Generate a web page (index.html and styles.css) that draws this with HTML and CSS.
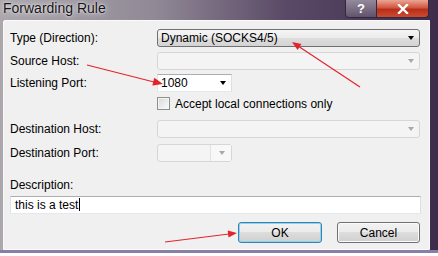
FILE: index.html
```html
<!DOCTYPE html>
<html lang="en">
<head>
    <meta charset="UTF-8">
    <title>Forwarding Rule</title>
    <link rel="stylesheet" href="styles.css">
</head>
<body>
    <div class="window">
        <div class="titlebar">
            <span class="title">Forwarding Rule</span>
            <div class="caption">
                <span class="cap-btn help">?</span>
                <span class="cap-btn close">
                    <svg width="12" height="10" viewBox="0 0 12 10">
                        <path d="M2 1 L10 9 M10 1 L2 9" stroke="#fff" stroke-width="2.4" stroke-linecap="square"/>
                    </svg>
                </span>
            </div>
        </div>

        <div class="client">
            <div class="row r-type">
                <label>Type (Direction):</label>
                <div class="combo wide"><span>Dynamic (SOCKS4/5)</span><i class="arrow"></i></div>
            </div>
            <div class="row r-source">
                <label>Source Host:</label>
                <div class="combo wide disabled"><i class="arrow"></i></div>
            </div>
            <div class="row r-listen">
                <label>Listening Port:</label>
                <div class="combo short edit"><span>1080</span><i class="arrow"></i></div>
            </div>
            <div class="row r-check">
                <span class="checkbox"></span>
                <span>Accept local connections only</span>
            </div>
            <div class="row r-dhost">
                <label>Destination Host:</label>
                <div class="combo wide disabled"><i class="arrow"></i></div>
            </div>
            <div class="row r-dport">
                <label>Destination Port:</label>
                <div class="combo short disabled split"><span class="drop"><i class="arrow"></i></span></div>
            </div>

            <div class="desc-label">Description:</div>
            <div class="textbox">this is a test<span class="caret"></span></div>

            <div class="buttons">
                <button class="btn ok">OK</button>
                <button class="btn cancel">Cancel</button>
            </div>
        </div>

        <!-- red annotation arrows drawn over the dialog -->
        <svg class="marks" width="438" height="256" viewBox="0 0 438 256">
            <g stroke="#e3232b" stroke-width="1.2" fill="#e3232b">
                <line x1="360" y1="87" x2="298" y2="46"/>
                <polygon points="292,42 301.4,44.1 297.6,49.9" stroke="none"/>
                <line x1="87" y1="65" x2="154" y2="82"/>
                <polygon points="163,84 154.3,77.7 152.3,85.5" stroke="none"/>
                <line x1="165" y1="242" x2="229" y2="234"/>
                <polygon points="237,233 228.5,237.6 227.7,230.6" stroke="none"/>
            </g>
        </svg>
    </div>
</body>
</html>
```

FILE: styles.css
```css
* {
    box-sizing: border-box;
}

body {
    margin: 0;
    background: #ffffff;
    font-family: "Liberation Sans", Arial, sans-serif;
    font-size: 12px;
    color: #000;
}

.window {
    position: relative;
    width: 438px;
    height: 253px;
    display: flex;
    flex-direction: column;
    background: linear-gradient(to right, #aba7ad 0%, #918a96 35%, #5b4a67 65%, #3d2d4a 100%);
    border-bottom: 3px solid #8a7ea6;
}

.titlebar {
    height: 20px;
    display: flex;
    justify-content: space-between;
    align-items: flex-start;
}

.title {
    padding-left: 3px;
    font-size: 14px;
    line-height: 16px;
    color: #151515;
    text-shadow: 0 0 6px rgba(255, 255, 255, 0.9), 0 0 2px rgba(255, 255, 255, 0.8);
}

.caption {
    display: flex;
    margin-right: 9px;
}

.cap-btn {
    height: 18px;
    display: flex;
    align-items: center;
    justify-content: center;
    border: 1px solid #33283b;
    border-top: none;
}

.help {
    width: 32px;
    border-radius: 0 0 0 4px;
    background: linear-gradient(rgba(255, 255, 255, 0.4), rgba(255, 255, 255, 0.12));
    color: #fff;
    font-weight: bold;
    font-size: 13px;
}

.close {
    width: 52px;
    border-left: none;
    border-radius: 0 0 4px 0;
    background: linear-gradient(#e9a595, #d4563f 45%, #b72f1b 55%, #cc4a30);
}

.client {
    margin: 0 8px 0 3px;
    height: 230px;
    background: #f0f0f0;
    border: 1px solid #fafafa;
    border-top-left-radius: 2px;
    padding: 7px 9px 0 6px;
    display: flex;
    flex-direction: column;
}

.row {
    display: flex;
    align-items: center;
    height: 18px;
}

.row label {
    width: 147px;
}

.r-type { margin-top: 1px; }
.r-source { margin-top: 5px; }
.r-listen { margin-top: 4px; }
.r-check { margin-top: 5px; height: 13px; padding-left: 147px; gap: 5px; }
.r-dhost { margin-top: 10px; }
.r-dport { margin-top: 6px; }

.combo {
    position: relative;
    height: 18px;
    padding-left: 3px;
    display: flex;
    align-items: center;
    border: 1px solid #707070;
    border-radius: 3px;
    background: linear-gradient(#f6f6f6, #ebebeb 50%, #dedede 51%, #d3d3d3);
}

.wide {
    width: 263px;
}

.short {
    width: 75px;
}

.arrow {
    position: absolute;
    right: 5px;
    top: 6px;
    border-top: 4px solid #000;
    border-left: 3.5px solid transparent;
    border-right: 3.5px solid transparent;
}

.combo.disabled {
    border-color: #d6d6d6;
    background: #f4f4f4;
}

.combo.disabled .arrow {
    border-top-color: #a8a8a8;
}

.combo.edit {
    border-radius: 0;
    background: #fff;
    border-color: #abadb3 #dbdfe6 #e3e9ef #e2e3ea;
}

.combo.split .drop {
    position: absolute;
    right: 0;
    top: 0;
    bottom: 0;
    width: 21px;
    border-left: 1px solid #e2e2e2;
    background: #f8f8f8;
}

.combo.split .arrow {
    right: 6px;
}

.checkbox {
    width: 13px;
    height: 13px;
    border: 1px solid #8e8f8f;
    background: linear-gradient(135deg, #d8d8d8, #fbfbfb);
    box-shadow: inset 0 0 0 1px #f4f4f4;
}

.desc-label {
    margin-top: 16px;
    line-height: 14px;
}

.textbox {
    margin-top: 4px;
    width: 411px;
    height: 18px;
    padding-left: 4px;
    line-height: 16px;
    background: #fff;
    border: 1px solid;
    border-color: #abadb3 #dbdfe6 #e3e9ef #e2e3ea;
}

.caret {
    display: inline-block;
    width: 1px;
    height: 13px;
    margin-left: 1px;
    vertical-align: -2px;
    background: #000;
}

.buttons {
    margin-top: 8px;
    display: flex;
    justify-content: flex-end;
    gap: 15px;
}

.btn {
    height: 21px;
    padding: 0;
    font-family: inherit;
    font-size: 12px;
    color: #000;
    border: 1px solid #707070;
    border-radius: 3px;
    background: linear-gradient(#f2f2f2, #ebebeb 49%, #dddddd 50%, #cfcfcf);
    box-shadow: inset 0 0 0 1px #fbfbfb;
}

.ok {
    width: 84px;
    border-color: #3c7fb1;
    box-shadow: inset 0 0 0 1px #8ad6ee;
}

.cancel {
    width: 83px;
}

.marks {
    position: absolute;
    left: 0;
    top: 0;
    pointer-events: none;
}
```
